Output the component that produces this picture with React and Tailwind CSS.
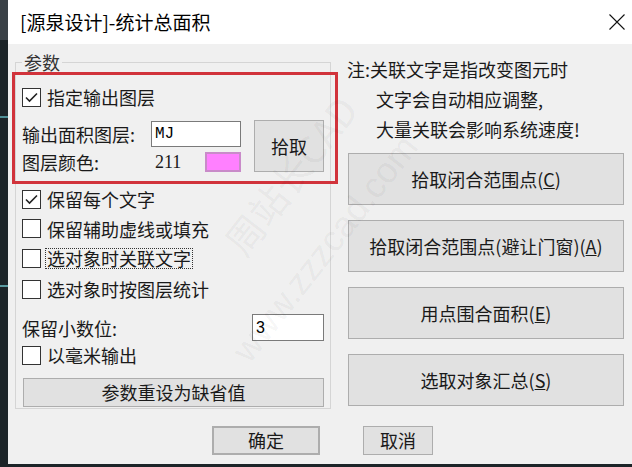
import React from 'react';

// 源泉设计 - 统计总面积 dialog

const CheckBox = ({ checked }) => (
  <span className="w-[19px] h-[19px] shrink-0 border border-[#333] bg-white flex items-center justify-center">
    {checked && (
      <svg width="17" height="17" viewBox="0 0 17 17">
        <path d="M3 8.5 L6.5 12 L14 4.5" fill="none" stroke="#222" strokeWidth="1.6" />
      </svg>
    )}
  </span>
);

const CheckRow = ({ checked, label, focus, className = '' }) => (
  <div className={`flex items-center ${className}`}>
    <CheckBox checked={checked} />
    {focus ? (
      <span className="ml-[4px] px-[1px] h-[21px] flex items-center border border-dotted border-[#333] leading-[19px]">
        {label}
      </span>
    ) : (
      <span className="ml-[6px] leading-[20px]">{label}</span>
    )}
  </div>
);

const Btn = ({ children, className = '' }) => (
  <button className={`bg-[#e1e1e1] border border-[#adadad] flex items-center justify-center text-[18px] text-[#1a1a1a] ${className}`}>
    {children}
  </button>
);

export default function App() {
  return (
    <div className="relative w-[632px] h-[467px] bg-[#1c2428] flex flex-col overflow-hidden font-['Noto_Sans_CJK_SC',sans-serif] text-[18px] text-[#1a1a1a]">
      <div className="h-[464px] flex">
        {/* CAD canvas strip behind the dialog */}
        <div className="w-[8px] shrink-0 flex flex-col">
          <div className="h-[40px] bg-[#3a4146]" />
          <div className="mt-[76px] h-[2px] bg-[#4f8f96]" />
          <div className="mt-[167px] h-[2px] bg-[#5a9aa0]" />
        </div>

        <div className="w-[624px] flex flex-col">
          {/* title bar */}
          <div className="h-[44px] bg-white flex items-center pl-[12px] pr-[7px]">
            <span className="text-[19px] leading-[24px] text-black">[源泉设计]-统计总面积</span>
            <svg className="ml-auto" width="16" height="16" viewBox="0 0 16 16">
              <path d="M0.5 0.5 L15.5 15.5 M15.5 0.5 L0.5 15.5" stroke="#111" strokeWidth="1.1" />
            </svg>
          </div>

          {/* body */}
          <div className="flex-1 bg-[#f0f0f0] flex flex-col">
            <div className="flex items-start">
              {/* 参数 group */}
              <div className="relative mt-[18px] ml-[7px] w-[316px] h-[347px] border border-[#d5d5d5] flex flex-col px-[6px] pt-[19px]">
                <span className="absolute -top-[13px] left-[6px] px-[2px] bg-[#f0f0f0] leading-[24px] text-[#333]">参数</span>

                <CheckRow checked label="指定输出图层" className="h-[30px]" />

                <div className="mt-[7px] flex items-start">
                  <div className="w-[232px] flex flex-col">
                    <div className="h-[30px] flex items-center">
                      <span className="w-[129px] shrink-0 leading-[20px]">输出面积图层:</span>
                      <div className="w-[90px] h-[26px] border border-[#7a7a7a] bg-white flex items-center pl-[3px] font-['Liberation_Mono',monospace] text-[16px] text-black">
                        MJ
                      </div>
                    </div>
                    <div className="h-[26px] flex items-center">
                      <span className="w-[133px] shrink-0 leading-[20px]">图层颜色:</span>
                      <span className="w-[50px] shrink-0 font-['Liberation_Serif',serif] text-[18px] leading-[20px]">211</span>
                      <span className="w-[36px] h-[20px] bg-[#ff80ff] border-2 border-[#c98bc9]" />
                    </div>
                  </div>
                  <Btn className="mt-[1px] w-[70px] h-[52px]">拾取</Btn>
                </div>

                <CheckRow checked label="保留每个文字" className="mt-[9px] h-[30px]" />
                <CheckRow label="保留辅助虚线或填充" className="h-[29px]" />
                <CheckRow label="选对象时关联文字" focus className="h-[30px]" />
                <CheckRow label="选对象时按图层统计" className="mt-[1px] h-[30px]" />

                <div className="mt-[10px] h-[27px] flex items-center">
                  <span className="leading-[20px]">保留小数位:</span>
                  <div className="ml-auto w-[72px] h-[27px] border border-[#7a7a7a] bg-white flex items-center pl-[3px] font-['Liberation_Sans',sans-serif] text-[16px] text-black">
                    3
                  </div>
                </div>

                <CheckRow label="以毫米输出" className="h-[28px]" />

                <Btn className="mt-[9px] ml-[1px] w-[301px] h-[29px]">参数重设为缺省值</Btn>
              </div>

              {/* right column */}
              <div className="ml-[16px] mt-[10px] w-[277px] flex flex-col">
                <div className="flex flex-col leading-[30px]">
                  <span>注:关联文字是指改变图元时</span>
                  <span className="pl-[29px]">文字会自动相应调整,</span>
                  <span className="pl-[29px]">大量关联会影响系统速度!</span>
                </div>
                <div className="mt-[9px] ml-[1px] flex flex-col gap-[15px]">
                  <Btn className="w-[276px] h-[52px]">拾取闭合范围点(<span className="underline">C</span>)</Btn>
                  <Btn className="w-[276px] h-[52px]">拾取闭合范围点(避让门窗)(<span className="underline">A</span>)</Btn>
                  <Btn className="w-[276px] h-[52px]">用点围合面积(<span className="underline">E</span>)</Btn>
                  <Btn className="w-[276px] h-[52px]">选取对象汇总(<span className="underline">S</span>)</Btn>
                </div>
              </div>
            </div>

            {/* OK / Cancel */}
            <div className="mt-[17px] flex pl-[204px]">
              <Btn className="w-[108px] h-[29px] border-2 border-[#0078d7]">确定</Btn>
              <Btn className="ml-[43px] w-[70px] h-[29px]">取消</Btn>
            </div>
          </div>
        </div>
      </div>

      {/* red annotation box */}
      <div className="absolute left-[12px] top-[72px] w-[326px] h-[112px] border-[3px] border-[#d1333b] pointer-events-none" />

      {/* watermark */}
      <div className="absolute left-[190px] top-[155px] w-[200px] text-center -rotate-[52deg] text-[38px] leading-[40px] text-black/[0.05] pointer-events-none whitespace-nowrap">
        周站长CAD
      </div>
      <div className="absolute left-[190px] top-[235px] w-[260px] text-center -rotate-[52deg] text-[36px] leading-[40px] text-black/[0.05] pointer-events-none whitespace-nowrap font-['Liberation_Sans',sans-serif]">
        www.zzzcad.com
      </div>
    </div>
  );
}
